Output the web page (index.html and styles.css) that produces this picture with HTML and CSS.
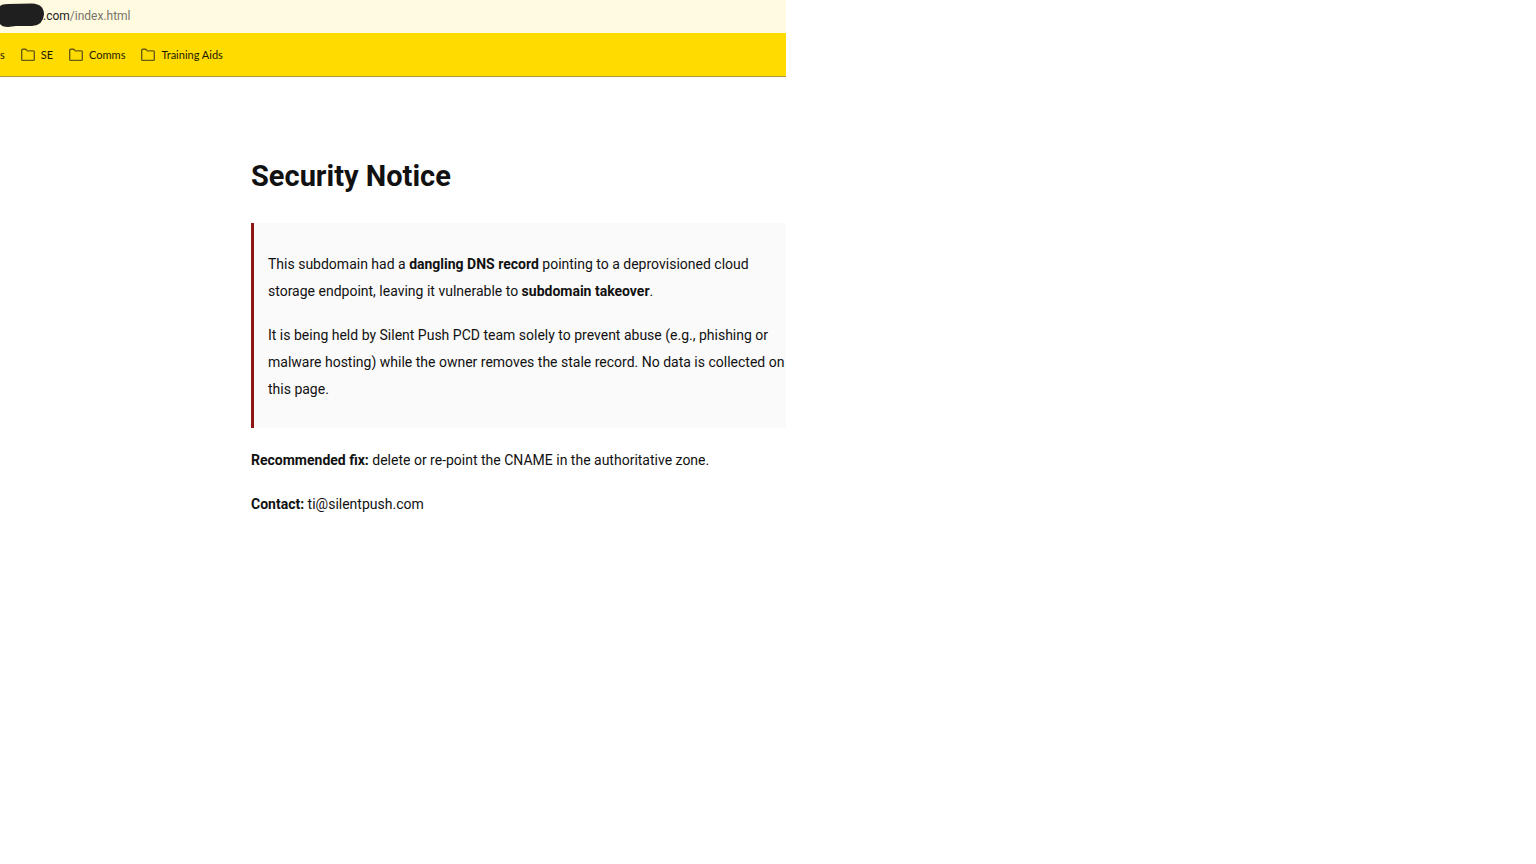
FILE: index.html
```html
<!DOCTYPE html>
<html lang="en">
<head>
    <meta charset="UTF-8">
    <meta name="viewport" content="width=device-width, initial-scale=1.0">
    <title>Security Notice</title>
    <link rel="stylesheet" href="styles.css">
</head>
<body>
    <div class="window">
        <!-- Address bar, host name is redacted -->
        <div class="address-bar">
            <svg class="redacted" width="45" height="28" viewBox="0 0 45 28" aria-hidden="true">
                <path d="M0 4 Q2 2 8 2 L32 1.500 Q44 2 44 12.500 Q43 23.500 32 24 L16 24 L8 25 Q2 25 0 22 Z" fill="#1f1f1f"/>
            </svg>
            <span class="host">.com</span><span class="path">/index.html</span>
        </div>
        <nav class="bookmarks">
            <a href="#" class="bookmark">s</a>
            <a href="#" class="bookmark">
                <svg class="folder" width="14" height="14" viewBox="0 0 14 14"><path d="M.7 11.500V2q0-.8.8-.8h3.200l1.700 1.700h6q.9 0 .9.900v7.700q0 .9-.9.900H1.500q-.8 0-.8-.9Z"/></svg>
                SE
            </a>
            <a href="#" class="bookmark">
                <svg class="folder" width="14" height="14" viewBox="0 0 14 14"><path d="M.7 11.500V2q0-.8.8-.8h3.200l1.700 1.700h6q.9 0 .9.900v7.700q0 .9-.9.900H1.500q-.8 0-.8-.9Z"/></svg>
                Comms
            </a>
            <a href="#" class="bookmark">
                <svg class="folder" width="14" height="14" viewBox="0 0 14 14"><path d="M.7 11.500V2q0-.8.8-.8h3.200l1.700 1.700h6q.9 0 .9.900v7.700q0 .9-.9.900H1.500q-.8 0-.8-.9Z"/></svg>
                Training Aids
            </a>
        </nav>
        <main class="content">
            <h1>Security Notice</h1>
            <div class="notice">
                <p>This subdomain had a <strong>dangling DNS record</strong> pointing to a deprovisioned cloud<br>storage endpoint, leaving it vulnerable to <strong>subdomain takeover</strong>.</p>
                <p>It is being held by Silent Push PCD team solely to prevent abuse (e.g., phishing or<br>malware hosting) while the owner removes the stale record. No data is collected on<br>this page.</p>
            </div>
            <p><strong>Recommended fix:</strong> delete or re-point the CNAME in the authoritative zone.</p>
            <p><strong>Contact:</strong> ti@silentpush.com</p>
        </main>
    </div>
</body>
</html>
```
FILE: styles.css
```css
body {
    font-family: Roboto, "Open Sans", sans-serif;
    font-size: 14px;
    line-height: 27px;
    background-color: #fff;
    color: #111;
    margin: 0;
}
.window {
    width: 51.17%;
    overflow: hidden;
}
.address-bar {
    display: flex;
    align-items: center;
    height: 33px;
    box-sizing: border-box;
    padding-bottom: 1px;
    background-color: #fffae0;
    font-size: 12px;
}
.redacted {
    margin-right: -2px;
}
.host {
    color: #222;
}
.path {
    color: #77756a;
}
.bookmarks {
    display: flex;
    align-items: center;
    gap: 16px;
    height: 43px;
    background-color: #ffdb00;
    border-bottom: 1px solid #b0983c;
    font-family: Lato, "Open Sans", sans-serif;
    font-size: 11px;
    white-space: nowrap;
}
.bookmark {
    display: flex;
    align-items: center;
    gap: 6px;
    color: #1c1a00;
    text-decoration: none;
}
.folder {
    fill: none;
    stroke: #6b5d10;
    stroke-width: 1.4;
}
.content {
    padding: 79px 0 0 251px;
}
h1 {
    font-size: 29px;
    line-height: 40px;
    margin: 0 0 27px;
}
p {
    margin: 17px 0;
    white-space: nowrap;
}
/* Grey box with the red bar on the left */
.notice {
    display: flow-root;
    margin-bottom: 19px;
    padding: 11px 0 8px 14px;
    border-left: 3px solid #8f1414;
    background-color: #fafafa;
}
```
